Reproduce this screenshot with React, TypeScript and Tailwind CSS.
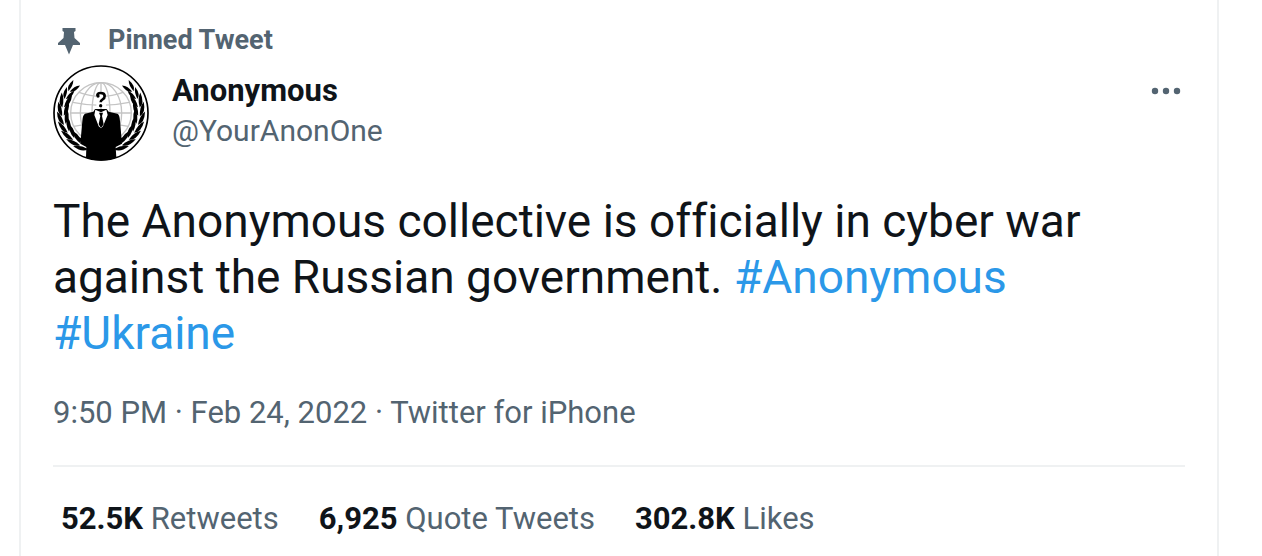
import React from "react";

const stats = [
  { value: "52.5K", label: "Retweets" },
  { value: "6,925", label: "Quote Tweets" },
  { value: "302.8K", label: "Likes" },
];

const leafAngles = [110, 123, 136, 149, 162, 175, 188, 201, 214];

const Laurel = () => (
  <g>
    {leafAngles.map((angle) => {
      const rad = (angle * Math.PI) / 180;
      const x = 143 + 114 * Math.cos(rad);
      const y = 142 + 114 * Math.sin(rad);
      const scale = angle > 190 ? 0.8 : 1;
      return (
        <g
          key={angle}
          transform={`translate(${x} ${y}) rotate(${angle + 94}) scale(${scale})`}
        >
          <path d="M-2 -2Q8 -20 42 -13Q26 0 -2 -2Z" />
          <path d="M0 3Q10 22 42 19Q26 2 0 3Z" />
        </g>
      );
    })}
  </g>
);

const Avatar = () => (
  <svg viewBox="0 0 288 288" className="size-24 shrink-0" role="img" aria-label="Anonymous">
    <circle cx="144" cy="144" r="141" fill="#fff" stroke="#000" strokeWidth="5" />
    <g fill="none" stroke="#c4c4c4" strokeWidth="4">
      <circle cx="144" cy="144" r="91" />
      <ellipse cx="144" cy="144" rx="62" ry="91" />
      <ellipse cx="144" cy="144" rx="27" ry="91" />
      <path d="M144 53V235M53 144H235M78 82Q144 106 210 82M59 112Q144 130 229 112M62 184Q144 166 226 184" />
    </g>
    <Laurel />
    <g transform="translate(288 0) scale(-1 1)">
      <Laurel />
    </g>
    <path d="M126 132L161 132L167 140L193 146Q200 149 201 168L207 236L188 246L190 278Q144 296 99 278L100 246L82 236L88 168Q89 150 96 146L121 140Z" />
    <path d="M127 134L144 142L160 134L164 150L150 184L144 190L137 184L124 150Z" fill="#fff" />
    <path d="M138 143H150L147 153L152 178L144 189L137 178L142 153Z" />
    <path d="M130 80H159V126H130Z" fill="#fff" />
    <path
      d="M133 92Q133 84 143 84Q155 84 155 93Q155 100 149 103Q143 106 143 112"
      fill="none"
      stroke="#000"
      strokeWidth="8"
    />
    <circle cx="135" cy="93" r="5" />
    <circle cx="143" cy="122" r="5" />
  </svg>
);

const App = () => {
  return (
    <main className="bg-white pl-[19px] pr-[43px] font-[Roboto,sans-serif] text-[#536471]">
      <article className="border-x-2 border-[#eff1f2] px-8 pt-6 pb-5">
        <div className="flex h-8 items-center gap-[27px] pl-1">
          <svg viewBox="0 0 24 28" className="h-7 w-6 overflow-visible fill-[#536471]" aria-hidden="true">
            <path d="M5.500 2H18.500V5L17 6L17.500 12L23 17V19H16L12 28.500L8 19H1V17L6.500 12L7 6L5.500 5Z" />
          </svg>
          <span className="text-[27px] leading-8 font-bold">Pinned Tweet</span>
        </div>
        <header className="mt-[9px] flex items-start">
          <Avatar />
          <div className="ml-[23px] grow pt-1.5 leading-10">
            <h2 className="text-[31px] leading-10 font-bold text-[#0f1419]">Anonymous</h2>
            <p className="text-[30px] leading-10">@YourAnonOne</p>
          </div>
          <button type="button" aria-label="More" className="mt-4 mr-1 h-5">
            <svg viewBox="0 0 30 20" className="h-5 w-[30px] fill-[#536471]">
              <circle cx="4" cy="10" r="3.200" />
              <circle cx="15" cy="10" r="3.200" />
              <circle cx="26" cy="10" r="3.200" />
            </svg>
          </button>
        </header>
        <p className="mt-8 text-[46px] leading-14 text-[#0f1419] [font-variant-ligatures:none]">
          The Anonymous collective is officially in cyber war against the Russian government.{" "}
          <a href="#anonymous" className="text-[#2b98e8]">#Anonymous</a>{" "}
          <a href="#ukraine" className="text-[#2b98e8]">#Ukraine</a>
        </p>
        <p className="mt-8 text-[31px] leading-10">
          <a href="#date">9:50 PM · Feb 24, 2022</a> · <a href="#source">Twitter for iPhone</a>
        </p>
        <div className="mt-8 flex gap-10 border-t-2 border-[#eff1f2] px-2 pt-8 text-[31px] leading-10">
          {stats.map((stat) => (
            <a key={stat.label} href="#stats">
              <span className="font-bold text-[#0f1419]">{stat.value}</span> {stat.label}
            </a>
          ))}
        </div>
      </article>
    </main>
  );
};

export default App;
